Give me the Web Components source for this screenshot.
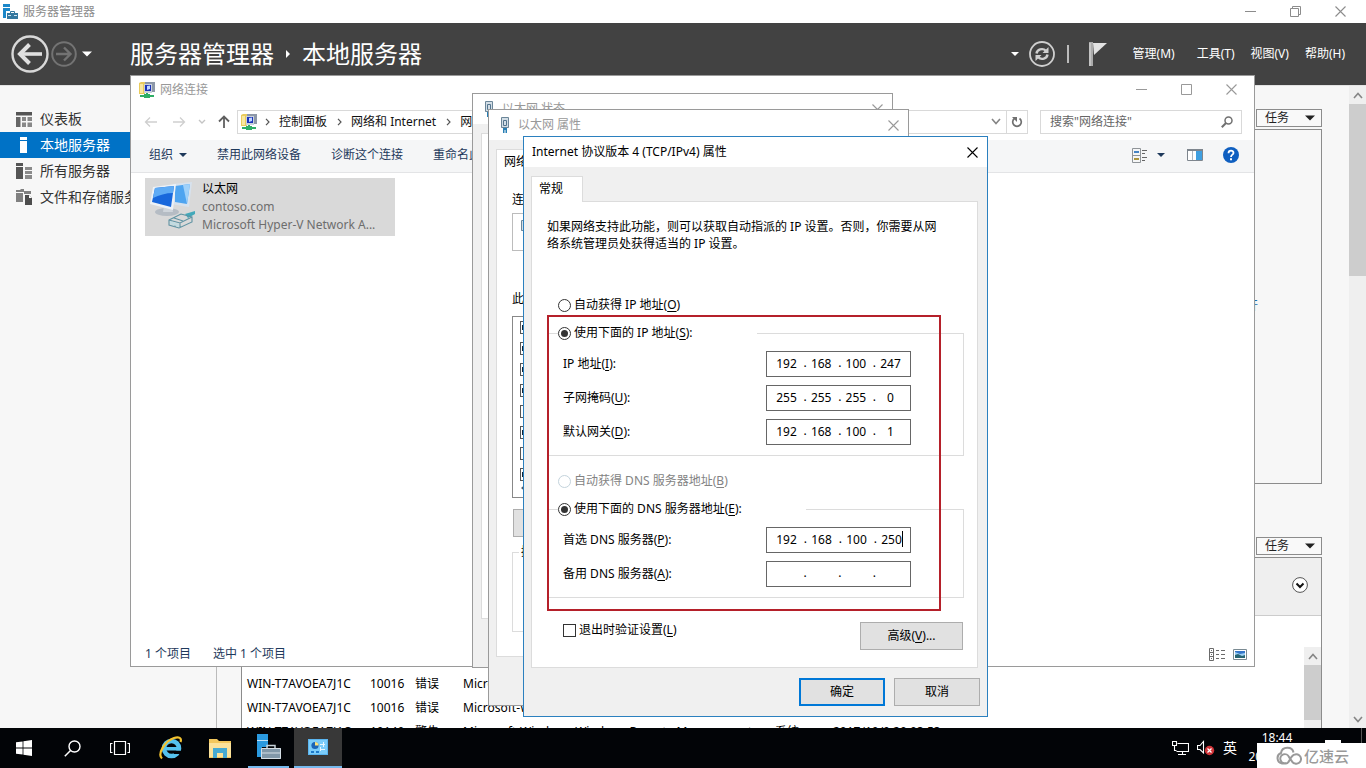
<!DOCTYPE html>
<html lang="zh-CN">
<head>
<meta charset="utf-8">
<title>服务器管理器</title>
<style>
html, body { margin: 0; height: 100%; }
body { font: 12px/16px "Noto Sans", "Noto Sans CJK SC", sans-serif; color: #000; background: #f7f7f7; overflow: hidden; }
</style>
</head>
<body>
<desktop-screen></desktop-screen>
<script>
const RESET = `*{box-sizing:border-box} button,input{font:inherit;color:inherit;margin:0;padding:0} button{background:none;border:0} a{color:inherit;text-decoration:none} u{text-underline-offset:2px}`;

function define(name, css, html) {
  customElements.define(name, class extends HTMLElement {
    constructor() { super(); this.attachShadow({ mode: 'open' }); }
    connectedCallback() {
      const body = typeof html === 'function' ? html(this) : html;
      this.shadowRoot.innerHTML = `<style>${RESET}${css}</style>${body}`;
    }
  });
}

const stroke = (d, c = 'currentColor', w = 1) => `<path d="${d}" fill="none" stroke="${c}" stroke-width="${w}"/>`;
const fill = (d, c = 'currentColor') => `<path d="${d}" fill="${c}"/>`;
const ICONS = {
  min: [11, 11, stroke('M0 5.5H11')],
  max: [11, 11, stroke('M.5 .5H10.5V10.5H.5Z')],
  restore: [11, 11, stroke('M.5 2.5H8.5V10.5H.5ZM2.5 2.5V.5H10.5V8.5H8.5')],
  close: [11, 11, stroke('M.5 .5L10.5 10.5M10.5 .5L.5 10.5', 'currentColor', 1.1)],
  caret: [10, 6, fill('M0 .5H10L5 5.5Z')],
  caretS: [8, 4, fill('M0 0H8L4 4Z')],
  right: [6, 8, fill('M1 0L5 4L1 8Z')],
  crumb: [5, 8, stroke('M1 .8L4 4L1 7.2', '#555', 1.2)],
  up: [10, 7, stroke('M1 6L5 1.5L9 6', '#858585', 1.6)],
  down: [10, 7, stroke('M1 1L5 5.5L9 1', '#858585', 1.6)],
  back: [38, 38, '<circle cx="19" cy="19" r="17.5" fill="none" stroke="#d8d8d8" stroke-width="2.4"/>' + stroke('M8 19H31', '#e0e0e0', 3.6) + stroke('M18.5 9.5L9 19L18.5 28.5', '#e0e0e0', 4)],
  fwd: [26, 26, '<circle cx="13" cy="13" r="11.8" fill="none" stroke="#737373" stroke-width="2"/>' + stroke('M5 13H19M13 6.5L19.5 13L13 19.5', '#737373', 2.4)],
  refreshBig: [26, 26, '<circle cx="13" cy="13" r="12" fill="none" stroke="#cfcfcf" stroke-width="1.8"/>' + stroke('M7.5 12.5C8 8.5 13.5 6.5 17 9.8M18.5 13.5C18 17.5 12.500 19.500 9 16.200', '#cfcfcf', 2.4) + fill('M19.500 6V12H13.500ZM6.500 20V14H12.500Z', '#cfcfcf')],
  flag: [18, 24, fill('M0 0H4V24H0Z', '#aaa') + fill('M4 1H18L5 13Z', '#e2e2e2') + stroke('M1 1V24', '#ddd', 1)],
  smTitle: [16, 16, fill('M1 0H8V3H1ZM1 4H8V7H4V14H1Z', '#1b87c9') + fill('M5 9H16V15H5Z', '#35789f') + stroke('M8.500 9V7.500H12.500V9', '#35789f') + fill('M6 11H9V12H12V11H15V12H6Z', '#cfe4f2')],
  dash: [16, 15, fill('M0 0H16V3.500H0Z', '#555') + fill('M0 5H4.500V15H0Z', '#666') + fill('M6 5H10V9H6ZM11.500 5H16V9H11.500ZM6 10.500H10V15H6ZM11.500 10.500H16V15H11.500Z', '#888')],
  local: [16, 16, fill('M4 0H11V3H4ZM4 4H11V16H4Z', '#fff')],
  all: [16, 16, fill('M0 0H7V3H0ZM0 4H7V16H0Z', '#555') + fill('M9 4H16V7H9ZM9 8H16V11H9ZM9 12H16V16H9Z', '#8a8a8a')],
  files: [16, 16, fill('M0 1H4L5 0H8V3H0ZM0 4H7V13H0Z', '#808080') + fill('M8 2H15V5H8Z', '#808080') + fill('M9 6H13L16 9V16H9Z', '#4d4d4d') + fill('M13 6V9H16Z', '#fff')],
  net: [16, 16, fill('M0 1L2 0H6V12H0Z', '#e9cb5c') + fill('M1 2H4V11H1Z', '#f8e7a0') + fill('M6 0H16V10H6Z', '#8d98a8') + fill('M5 2H13V11H5Z', '#c9d1dc') + fill('M6 3H12V9H6Z', '#1b32ba') + fill('M8 4L11 3.500V7L8 8Z', '#bfd6ff') + fill('M7 11H9V13H7ZM1 13H15V15H1ZM5 12H11V16H5Z', '#2eae66')],
  plug: [16, 16, fill('M4 1H12V11H4Z', '#d3dee6') + stroke('M4.500 3V.5H11.500V3L11.500 10.500H4.500Z', '#6c8699') + stroke('M6.500 3.500H9.500V8.500H6.500Z', '#55758e') + fill('M6 11H10V13H6ZM6 13H7V16H6ZM9 13H10V16H9ZM7.500 13H8.500V16H7.500Z', '#287fb5')],
  arrL: [14, 12, stroke('M1.500 6H13M6 1.500L1.500 6L6 10.500', '#cfcfcf', 1.3)],
  arrR: [14, 12, stroke('M1 6H12.500M8 1.500L12.500 6L8 10.500', '#cfcfcf', 1.3)],
  chevS: [8, 5, stroke('M1 1L4 4L7 1', '#c4c4c4', 1.4)],
  arrU: [12, 13, stroke('M6 1.500V13M1 6.500L6 1.500L11 6.500', '#606060', 1.8)],
  refresh: [12, 12, stroke('M8.500 2.500A4.300 4.300 0 1 1 3.500 2.500', '#707070', 1.7) + fill('M1 1H6V6Z', '#707070')],
  find: [12, 12, '<circle cx="7.500" cy="4.500" r="3.500" fill="none" stroke="#707070" stroke-width="1.5"/>' + stroke('M5 7L.8 11.200', '#707070', 2)],
  view: [16, 15, stroke('M.5 .5H8.500V14.500H.5ZM.5 7.500H8.500', '#8f9498') + fill('M2 3H7V5H2Z', '#4684c4') + fill('M2 10H7V12H2Z', '#ad963e') + stroke('M10 2.500H15M10 5.500H13M10 9.500H15M10 12.500H13', '#666')],
  pane: [16, 12, fill('M0 0H16V12H0Z', '#fff') + stroke('M.5 .5H15.500V11.500H.5Z', '#7e868e') + fill('M0 0H16V2H0Z', '#7e868e') + fill('M9 2H15V11H9Z', '#3f9fe0') + stroke('M5.500 2V11', '#b0b8c0')],
  help: [16, 16, '<circle cx="8" cy="8" r="8" fill="#0f5fc0"/>' + stroke('M5.500 6.200C5.500 2.800 10.600 3 10.500 6C10.400 7.800 8 7.600 8 10', '#fff', 1.8) + fill('M7 11.300H9V13.200H7Z', '#fff')],
  list: [17, 13, stroke('M.5 .5H4.500V12.500H.5ZM.5 4.500H4.500M.5 8.500H4.500M7 2.500H10M12 2.500H16M7 6.500H10M12 6.500H16M7 10.500H10M12 10.500H16', '#6b6b6b') + fill('M2 2H3V3H2ZM2 6H3V7H2ZM2 10H3V11H2Z', '#6b6b6b')],
  thumb: [14, 11, stroke('M.5 .5H13.500V10.500H.5Z', '#7a8a92') + fill('M2 2H12V9H2Z', '#9ed0f5') + fill('M2 9V6L5 5L9 7L12 6V9Z', '#276573') + fill('M2 2H12V4L7 5L2 3Z', '#3576c9')],
  monitors: [48, 50, fill('M24 4L43 2L40 27L22 24Z', '#d7e2ee') + fill('M26 6L41 4L38 24L26 22Z', '#4ea4f0') + fill('M34 5L41 4L38 24Z', '#9fd1fa') + '<ellipse cx="18" cy="32" rx="12" ry="4" fill="#b5bcc4"/>' + fill('M15 26H23L24 32H14Z', '#cfd5db') + fill('M4 7L27 4L24 30L1 24Z', '#edf2f7') + fill('M6 8L25 6L22 27L3 22Z', '#1767dc') + fill('M6 8L25 6L24 13C17 13 10 15 4 18Z', '#5eabf5') + fill('M46 31L36 34L39 38L46 34Z', '#43a9ba') + stroke('M20 40L32 34L43 37V42L30 48L20 45ZM20 40L31 43L43 37M31 43V48M25 38L34 41M22 42L27 46', '#5f93a3', 1.1) + fill('M21 41L30 44V47L21 44Z', '#c1dbe1')],
  expand: [16, 16, '<circle cx="8" cy="8" r="7.400" fill="#fff" stroke="#555"/>' + stroke('M4.500 6.500L8 10L11.500 6.500', '#111', 2)],
  win: [16, 16, fill('M0 2.300L6.600 1.400V7.600H0ZM7.400 1.300L16 0V7.600H7.400ZM0 8.400H6.600V14.600L0 13.700ZM7.400 8.400H16V16L7.400 14.700Z', '#fff')],
  search: [17, 17, '<circle cx="10.500" cy="6.500" r="5.500" fill="none" stroke="#fff" stroke-width="1.4"/>' + stroke('M6.500 10.500L.8 16.200', '#fff', 1.5)],
  tasks: [20, 14, stroke('M4.500 .5H15.500V13.500H4.500ZM2.500 2.500H.5V11.500H2.500M17.500 2.500H19.500V11.500H17.500', '#fff', 1.2)],
  ie: [24, 24, '<circle cx="12.500" cy="12.500" r="7.500" fill="none" stroke="#55c2ee" stroke-width="4.600"/>' + fill('M14 14.500H24V18H15Z', '#020407') + fill('M7 11H22V14.500H7Z', '#55c2ee') + stroke('M3 22.500C-2 18 6 5 15 2C20 .4 23 2 21.500 6', '#f2c230', 2.200)],
  folder: [22, 20, fill('M0 1H8L10 3H22V20H0Z', '#f2c75c') + fill('M0 5H22V19H0Z', '#fbe29a') + fill('M4 10H18V20H14V15H8V20H4Z', '#45aad2')],
  server: [26, 26, fill('M1 0H12V6H1ZM1 7H12V13H6V23H1Z', '#2a9ae0') + stroke('M1 6.500H12', '#bfe2f7') + fill('M5 14H25V25H5Z', '#8197a8') + stroke('M5.500 14.500H24.500V24.500H5.500ZM5 19H25', '#d5dee5') + stroke('M11 14V11.500H19V14', '#c5d0d8', 1.500)],
  cpl: [20, 16, fill('M0 0H20V16H0Z', '#5ab5f0') + fill('M1 1H19V15H1Z', '#7bccfa') + '<circle cx="7" cy="6.500" r="3.600" fill="#1c65b5"/>' + fill('M7 6.500V2.900A3.600 3.600 0 0 1 10.600 6.500Z', '#ffe27a') + stroke('M12 5.500H17M15.500 3V8M12.500 8V12M12 10.500H17', '#e9f7ff') + fill('M3 12H6V14H3ZM8 12H11V14H8Z', '#1c79c9')],
  lan: [17, 14, stroke('M5.500 2.500H16.500V10.500H4.500M10.500 10.500V13M6 13.500H14M.5 .5H4.500V4.500H.5ZM2.500 4.500V9.500H4.500', '#fff', 1.1)],
  mute: [18, 16, stroke('M.5 5.500H3L6.500 1.500V13L3 9.500H.5Z', '#fff', 1.1) + '<circle cx="12.500" cy="10.500" r="4.700" fill="#d13438"/>' + stroke('M10.500 8.500L14.500 12.500M14.500 8.500L10.500 12.500', '#fff', 1.200)],
  cloud: [27, 19, stroke('M11 17.500H7A5.500 5.500 0 0 1 6 7C7 0 17.500 0 18.500 6.500M11 17.500C15 17.500 15 9 20 8.500A4.700 4.700 0 1 1 20 17.500C17 17.500 16.500 14 14 11A4.500 4.500 0 1 0 11 17', '#999', 2)],
  arrowBar: [12, 10, fill('M7 0V10L1 5Z', '#505a64')]
};
define('ui-icon', ':host{display:block;flex:none} svg{display:block}', el => {
  const [w, h, art] = ICONS[el.getAttribute('name')];
  return `<svg width="${w}" height="${h}" viewBox="0 0 ${w} ${h}" aria-hidden="true">${art}</svg>`;
});

/* Floating window: title bar, caption buttons, client area */
define('win-frame', `
:host{position:absolute;isolation:isolate;display:flex;flex-direction:column;box-sizing:border-box;border:1px solid var(--edge,#9a9a9a);background:#fff;--cap:30px}
header{display:flex;align-items:center;flex:none;height:var(--cap);padding-left:8px;gap:5px;color:#999;background:#fff}
:host([active]) header{color:#000}
h2{font:inherit;margin:0;flex:1}
.caps{display:flex;height:100%}
button{width:30px;height:100%;display:grid;place-items:center}
:host([wide]) button{width:45px}
main{flex:1;display:flex;flex-direction:column;min-height:0;background:var(--client,#f0f0f0)}
`, el => {
  const icon = el.getAttribute('icon');
  const btns = (el.getAttribute('controls') || 'close').split(' ');
  return `<header>${icon ? `<ui-icon name="${icon}"></ui-icon>` : ''}<h2>${el.getAttribute('heading')}</h2>
  <div class="caps">${btns.map(b => `<button aria-label="${b}"><ui-icon name="${b}"></ui-icon></button>`).join('')}</div></header><main><slot></slot></main>`;
});

define('push-button', `
:host{display:block;width:86px}
button{display:block;width:100%;height:28px;background:#e1e1e1;border:1px solid #adadad}
:host([primary]) button{border:2px solid #0078d7}
`, '<button><slot></slot></button>');

define('tab-sheet', `
:host{display:flex;flex-direction:column}
button{align-self:flex-start;height:26px;padding:0 19px 2px 7px;background:#fff;border:1px solid #dcdcdc;border-bottom:0;margin-bottom:-1px;z-index:1;white-space:nowrap}
section{flex:1;background:#fff;border:1px solid #dcdcdc}
`, el => `${el.getAttribute('label') ? `<button role="tab" aria-selected="true">${el.getAttribute('label')}</button>` : ''}<section><slot></slot></section>`);

define('choice-box', `
:host{display:flex}
label{display:flex;align-items:center;gap:3px}
input{appearance:none;width:13px;height:13px;flex:none;border:1px solid #333;background:#fff;display:grid;place-items:center}
input[type=radio]{border-radius:50%}
input[type=radio]:checked::before{content:"";width:7px;height:7px;border-radius:50%;background:#333}
input:disabled{border-color:#c3d3dc}
input:disabled + span{color:#838383}
`, el => `<label><input type="${el.getAttribute('kind') || 'radio'}"${el.hasAttribute('checked') ? ' checked' : ''}${el.hasAttribute('disabled') ? ' disabled' : ''}><span><slot></slot></span></label>`);

define('group-box', `
:host{display:block}
fieldset{margin:0;padding:10px 52px 10px 10px;border:1px solid #dcdcdc;min-width:0}
legend{padding:0 64px 0 0}
div{display:flex;flex-direction:column;gap:8px;padding-left:5px}
`, '<fieldset><legend><slot name="legend"></slot></legend><div><slot></slot></div></fieldset>');

/* Four-octet address editor with its caption */
define('address-row', `
:host{display:flex;align-items:center;justify-content:space-between}
div{display:flex;align-items:center;width:145px;height:26px;border:1px solid #666;background:#fff;padding:0 5px 2px}
input{width:29px;height:20px;border:0;outline:0;background:none;text-align:center;flex:none}
span{width:6px;text-align:right}
label{padding-bottom:1px}
b{width:1px;height:16px;background:#000;margin-left:-4px}
`, el => {
  const oct = (el.getAttribute('value') || '...').split('.');
  return `<label for="o0"><slot></slot></label><div>${oct.map((o, i) => `<input id="o${i}" value="${o}" aria-label="${i + 1}">`).join('<span>.</span>')}${el.hasAttribute('caret') ? '<b></b>' : ''}</div>`;
});

define('scroll-bar', `
:host{display:flex;flex-direction:column;align-items:center;background:#efefef;width:17px;flex:none}
ui-icon{padding:6px 0 5px}
i{display:block;width:100%;height:var(--thumb,172px);background:#cdcdcd}
i + ui-icon{margin-top:auto}
`, el => `<ui-icon name="up"></ui-icon><i></i>${el.hasAttribute('end') ? '<ui-icon name="down"></ui-icon>' : ''}`);

define('tcpip-dialog', `
:host{display:contents}
win-frame{left:523px;top:136px;width:465px;--edge:#2b80bf}
.sheet{margin:9px 9px 0 7px}
p{margin:0;padding-top:16px;line-height:17px;white-space:nowrap}
.form{padding:0 13px 17px 15px}
.r{margin:45px 0 12px 11px}
.r.dns{margin:17px 0 12px 11px}
.row{display:flex;justify-content:space-between;margin-top:24px;padding:0 1px 0 16px}
.row push-button{width:103px}
choice-box[kind]{align-self:flex-start}
footer{display:flex;justify-content:flex-end;gap:9px;padding:10px 7px}
.mark{position:absolute;left:23px;top:178px;width:394px;height:296px;border:2px solid #b5202a;pointer-events:none}
`, `
<win-frame active heading="Internet 协议版本 4 (TCP/IPv4) 属性">
 <tab-sheet class="sheet" label="常规"><div class="form">
  <p>如果网络支持此功能，则可以获取自动指派的 IP 设置。否则，你需要从网<br>络系统管理员处获得适当的 IP 设置。</p>
  <choice-box class="r">自动获得 IP 地址(<u>O</u>)</choice-box>
  <group-box><choice-box slot="legend" checked>使用下面的 IP 地址(<u>S</u>):</choice-box>
   <address-row value="192.168.100.247">IP 地址(<u>I</u>):</address-row>
   <address-row value="255.255.255.0">子网掩码(<u>U</u>):</address-row>
   <address-row value="192.168.100.1">默认网关(<u>D</u>):</address-row>
  </group-box>
  <choice-box class="r dns" disabled>自动获得 DNS 服务器地址(<u>B</u>)</choice-box>
  <group-box><choice-box slot="legend" checked>使用下面的 DNS 服务器地址(<u>E</u>):</choice-box>
   <address-row value="192.168.100.250" caret>首选 DNS 服务器(<u>P</u>):</address-row>
   <address-row>备用 DNS 服务器(<u>A</u>):</address-row>
  </group-box>
  <div class="row"><choice-box kind="checkbox">退出时验证设置(<u>L</u>)</choice-box><push-button>高级(<u>V</u>)...</push-button></div>
 </div></tab-sheet>
 <footer><push-button primary>确定</push-button><push-button>取消</push-button></footer>
 <div class="mark"></div>
</win-frame>`);

define('adapter-dialog', `
:host{display:contents}
win-frame{left:488px;top:109px;width:421px;height:597px}
.sheet{flex:1;margin:9px 8px 48px 7px}
.in{display:flex;flex-direction:column;padding:17px 15px 0}
.dev{height:38px;margin:5px 0 40px;border:1px solid #bcbcbc;padding:6px 0 0 4px}
.list{margin:9px 0 11px;height:182px;border:1px solid #888;padding:3px 0 0 7px}
.list label{display:block;height:21px;padding-top:1px}
.list label:nth-last-child(2){height:16px}
.list input{appearance:none;display:block;width:13px;height:13px;border:1px solid #555;background:#fff}
.list input:checked{box-shadow:inset 0 0 0 1px #fff, inset 0 3px #fff, inset 0 -3px #fff;background:#123}
push-button{margin-left:1px}
fieldset{margin:7px 0 0;padding:0;height:88px;border:1px solid #dcdcdc}
legend{margin-left:6px;padding:0 2px}
`, `
<win-frame icon="plug" heading="以太网 属性">
 <tab-sheet class="sheet" label="网络"><div class="in">
  <span>连接</span>
  <div class="dev"><ui-icon name="plug"></ui-icon></div>
  <span>此连接</span>
  <div class="list">${[1, 1, 1, 1, 0, 1, 0, 1].map(c => `<label><input type="checkbox" aria-label="项目"${c ? ' checked' : ''}></label>`).join('')}<ui-icon name="arrowBar"></ui-icon></div>
  <push-button>安装(N)...</push-button>
  <fieldset><legend>描述</legend></fieldset>
 </div></tab-sheet>
</win-frame>`);

define('status-dialog', `
:host{display:contents}
win-frame{left:472px;top:93px;width:421px;height:575px}
.sheet{flex:1;margin:9px 8px 48px 8px}
`, `<win-frame icon="plug" heading="以太网 状态"><tab-sheet class="sheet"></tab-sheet></win-frame>`);

define('network-window', `
:host{display:contents}
win-frame{left:130px;top:75px;width:1125px;height:592px;--cap:27px;--client:#fff}
.nav{display:flex;align-items:center;height:37px;padding:0 12px}
.go{display:flex;align-items:center;gap:14px;width:94px;flex:none;padding-left:1px}
.go ui-icon:nth-child(3){margin:0 -2px}
.addr{flex:1;display:flex;align-items:center;height:24px;border:1px solid #d9d9d9;padding-left:3px;color:#111;white-space:nowrap}
.addr a{margin:0 10px 0 9px}
.addr .i{margin-right:8px}
.addr .dn{margin-left:auto;margin-right:5px}
.addr button{width:21px;height:22px;border-left:1px solid #d9d9d9;display:grid;place-items:center}
.q{display:flex;align-items:center;width:202px;height:24px;margin-left:12px;border:1px solid #d9d9d9;padding:0 8px 0 9px}
.q input{border:0;outline:0;flex:1;min-width:0}
.q input::placeholder{color:#666;opacity:1}
.bar{display:flex;align-items:center;height:33px;background:#f5f6f7;border-bottom:1px solid #e3e4e6;padding:0 15px 2px 18px;color:#1e395b;white-space:nowrap}
.bar button{display:flex;align-items:center;gap:6px;margin-right:30px}
.bar .sp{flex:1}
.bar .v{margin-right:22px;gap:9px}
.bar .p{margin-right:20px}
.bar .h{margin:0}
.files{flex:1;padding:5px 14px}
.item{display:flex;gap:5px;width:250px;height:58px;background:#d9d9d9;padding:2px 4px 0;line-height:18px}
.item div{color:#6d6d6d;white-space:nowrap}
.item strong{font-weight:400;color:#000;display:block}
footer{display:flex;align-items:center;height:24px;padding:0 7px 0 14px;gap:7px;color:#1e395b}
footer span{margin-right:15px}
footer span + span{margin-right:auto}
`, `
<win-frame wide icon="net" controls="min max close" heading="网络连接">
 <div class="nav">
  <div class="go"><ui-icon name="arrL"></ui-icon><ui-icon name="arrR"></ui-icon><ui-icon name="chevS"></ui-icon><ui-icon name="arrU"></ui-icon></div>
  <div class="addr"><ui-icon class="i" name="net"></ui-icon><ui-icon name="crumb"></ui-icon><a href="#">控制面板</a><ui-icon name="crumb"></ui-icon><a href="#">网络和 Internet</a><ui-icon name="crumb"></ui-icon><a href="#">网络连接</a><ui-icon class="dn" name="down"></ui-icon><button aria-label="刷新"><ui-icon name="refresh"></ui-icon></button></div>
  <label class="q"><input placeholder='搜索"网络连接"' aria-label="搜索"><ui-icon name="find"></ui-icon></label>
 </div>
 <div class="bar"><button>组织 <ui-icon name="caretS"></ui-icon></button><button>禁用此网络设备</button><button>诊断这个连接</button><button>重命名此连接</button><span class="sp"></span>
  <button class="v" aria-label="更改视图"><ui-icon name="view"></ui-icon><ui-icon name="caretS"></ui-icon></button><button class="p" aria-label="预览窗格"><ui-icon name="pane"></ui-icon></button><button class="h" aria-label="帮助"><ui-icon name="help"></ui-icon></button></div>
 <div class="files"><div class="item"><ui-icon name="monitors"></ui-icon><div><strong>以太网</strong>contoso.com<br>Microsoft Hyper-V Network A...</div></div></div>
 <footer><span>1 个项目</span><span>选中 1 个项目</span><ui-icon name="list"></ui-icon><ui-icon name="thumb"></ui-icon></footer>
</win-frame>`);

define('task-menu', `
:host{display:block;align-self:flex-end;width:66px}
button{display:flex;align-items:center;justify-content:space-between;width:100%;height:18px;border:1px solid #8c8c8c;background:#f9f9f9;padding:0 6px 0 8px;line-height:16px;color:#222}
`, '<button>任务<ui-icon name="caret"></ui-icon></button>');

define('server-manager', `
:host{display:flex;flex-direction:column;flex:1;min-height:0}
.title{display:flex;align-items:center;height:23px;background:#fff;color:#8c8c8c;padding:0 3px 0 2px;gap:5px}
.title span{flex:1}
.caps{display:flex}
.title button{width:45px;height:20px;display:grid;place-items:center}
.head{display:flex;align-items:center;height:62px;background:#424242;color:#fff;padding:0 21px 0 11px}
.head ui-icon{flex:none}
.head .f{margin:0 5px 0 2px}
.head h1{display:flex;align-items:center;gap:11px;margin:0 0 0 38px;font-size:24px;line-height:32px;font-weight:400;flex:1}
.tools{display:flex;align-items:center;gap:10px;color:#fff}
.tools i{width:2px;height:18px;background:#bbb;margin:0 10px 0 2px}
nav{display:flex;gap:16px;margin-left:26px}
nav a:first-child{margin-right:6px}
.body{flex:1;display:flex;min-height:0;border-top:1px solid #e3e3e3}
aside{width:217px;flex:none;padding-top:20px;border-right:1px solid #bbb;font-size:14px}
aside a{display:flex;align-items:center;gap:8px;height:26px;padding-left:16px;color:#333}
aside a.on{background:#0072c6;color:#fff}
.content{flex:1;display:flex;flex-direction:column;min-width:0;padding:23px 27px 0 24px}
.panel{display:flex;flex-direction:column;margin-top:2px;border:1px solid #8c8c8c}
.one{height:355px;margin-bottom:53px;padding:168px 63px 0;align-items:flex-end;color:#1b6fae}
.one a{height:16px}
.two{flex:1;border-bottom:0;background:#fff;min-height:0}
.bar{display:flex;justify-content:flex-end;align-items:center;height:58px;flex:none;background:#efefef;border-bottom:1px solid #ccc;padding:0 13px 4px}
.grid{display:flex;flex:1;min-height:0;margin-top:31px;overflow:hidden}
.rows{flex:1;padding-top:25px}
table{border-collapse:collapse;white-space:nowrap}
td{height:24px;padding:0 10px 0 0;line-height:16px}
td:first-child{padding-left:5px;width:128px}
td:nth-child(2){width:45px}
td:nth-child(3){width:48px}
td:nth-child(4){width:312px}
td:nth-child(5){width:58px}
`, `
<div class="title"><ui-icon name="smTitle"></ui-icon><span>服务器管理器</span><div class="caps"><button aria-label="最小化"><ui-icon name="min"></ui-icon></button><button aria-label="还原"><ui-icon name="restore"></ui-icon></button><button aria-label="关闭"><ui-icon name="close"></ui-icon></button></div></div>
<div class="head"><ui-icon name="back"></ui-icon><ui-icon class="f" name="fwd"></ui-icon><ui-icon name="caret"></ui-icon>
 <h1>服务器管理器<ui-icon name="right"></ui-icon>本地服务器</h1>
 <div class="tools"><ui-icon name="caretS"></ui-icon><ui-icon name="refreshBig"></ui-icon><i></i><ui-icon name="flag"></ui-icon></div>
 <nav><a href="#">管理(M)</a><a href="#">工具(T)</a><a href="#">视图(V)</a><a href="#">帮助(H)</a></nav></div>
<div class="body">
 <aside><a href="#"><ui-icon name="dash"></ui-icon>仪表板</a><a href="#" class="on"><ui-icon name="local"></ui-icon>本地服务器</a><a href="#"><ui-icon name="all"></ui-icon>所有服务器</a><a href="#"><ui-icon name="files"></ui-icon>文件和存储服务</a></aside>
 <div class="content">
  <task-menu></task-menu><div class="panel one"><a href="#">打开</a></div>
  <task-menu></task-menu><div class="panel two"><div class="bar"><ui-icon name="expand"></ui-icon></div>
   <div class="grid"><div class="rows"><table>
    <tr><td>WIN-T7AVOEA7J1C</td><td>10016</td><td>错误</td><td>Microsoft-Windows-DistributedCOM</td></tr>
    <tr><td>WIN-T7AVOEA7J1C</td><td>10016</td><td>错误</td><td>Microsoft-Windows-DistributedCOM</td></tr>
    <tr><td>WIN-T7AVOEA7J1C</td><td>10149</td><td>警告</td><td>Microsoft-Windows-Windows Remote Management</td><td>系统</td><td>2017/10/9 20:03:53</td></tr>
   </table></div><scroll-bar style="--thumb:55px"></scroll-bar></div></div>
 </div>
 <scroll-bar end></scroll-bar>
</div>`);

define('task-bar', `
:host{display:flex;align-items:stretch;height:40px;flex:none;background:#020407;color:#fff}
button{width:48px;display:grid;place-items:center}
.ie{margin-left:3px}
.f{width:49px}
.s{width:41px;margin-left:4px;border-bottom:2px solid #76b9ed}
.c{margin-left:5px;background:#383838;border-bottom:2px solid #76b9ed}
.tray{display:flex;align-items:center;gap:8px;margin-left:auto}
.tray span{font-size:14px;margin-right:2px}
time{text-align:center;line-height:19px;width:76px}
.gap{width:46px}
.end{width:5px;border-left:1px solid #555}
`, `<button aria-label="开始"><ui-icon name="win"></ui-icon></button><button aria-label="搜索"><ui-icon name="search"></ui-icon></button><button aria-label="任务视图"><ui-icon name="tasks"></ui-icon></button><button class="ie" aria-label="Internet Explorer"><ui-icon name="ie"></ui-icon></button><button class="f" aria-label="文件资源管理器"><ui-icon name="folder"></ui-icon></button><button class="s" aria-label="服务器管理器"><ui-icon name="server"></ui-icon></button><button class="c" aria-label="控制面板"><ui-icon name="cpl"></ui-icon></button>
<div class="tray"><ui-icon name="lan"></ui-icon><ui-icon name="mute"></ui-icon><span>英</span></div><time>18:44<br>2017/10/9</time><div class="gap"></div><div class="end"></div>`);

define('site-badge', `
:host{position:absolute;right:0;bottom:0;display:flex;align-items:center;box-sizing:border-box;width:109px;height:25px;padding-left:18px;gap:2px;background:#fff;color:#999;font-size:15px;font-weight:500}
i{position:absolute;right:25px;top:-3px;width:16px;height:3px;background:#fff}
`, '<i></i><ui-icon name="cloud"></ui-icon><span>亿速云</span>');

define('desktop-screen', `
:host{position:relative;display:flex;flex-direction:column;height:100vh;overflow:hidden}
`, `<server-manager></server-manager><network-window></network-window><status-dialog></status-dialog><adapter-dialog></adapter-dialog><tcpip-dialog></tcpip-dialog><task-bar></task-bar><site-badge></site-badge>`);
</script>
</body>
</html>
